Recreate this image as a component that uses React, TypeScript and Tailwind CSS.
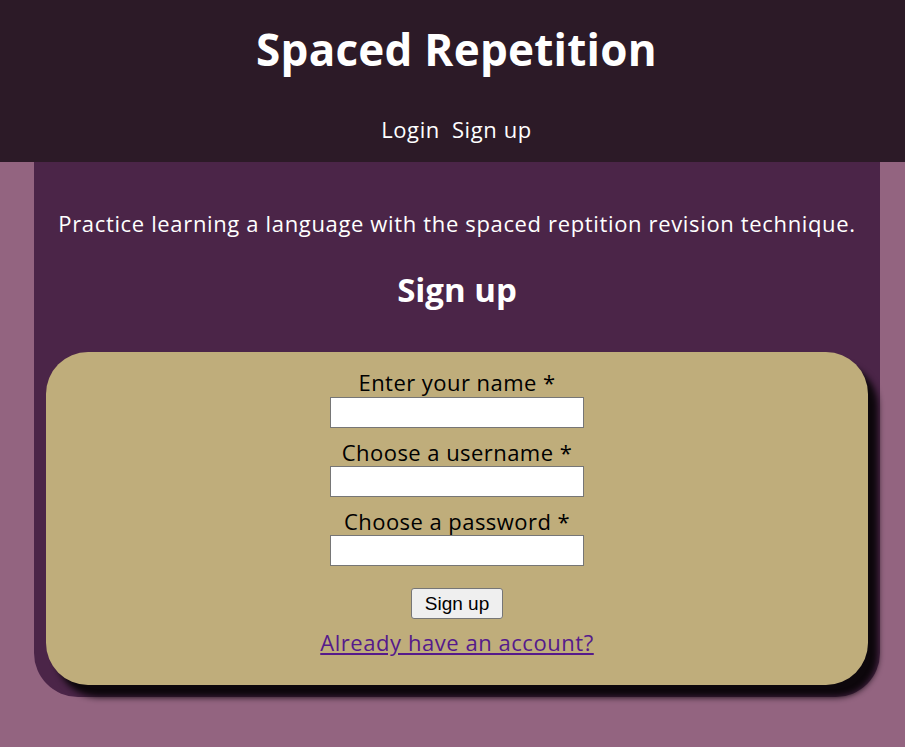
export default function App() {
  return (
    <div className="min-h-screen bg-[#936480] font-['Open_Sans',sans-serif] pb-[50px]">
      <header className="h-[162px] bg-[#2c1a27] pl-[8px] flex flex-col items-center text-white">
        <h1 className="mt-[19px] text-[44px] leading-[60px] font-bold tracking-[0.25px]">Spaced Repetition</h1>
        <nav className="mt-[35px] flex gap-[12px] text-[22px] leading-[30px] tracking-[0.6px]">
          <a href="#">Login</a>
          <a href="#">Sign up</a>
        </nav>
      </header>

      <main className="ml-[34px] w-[846px] bg-[#4b2548] rounded-b-[44px] px-3 pb-3 pt-[46px]">
        <p className="text-center text-white text-[22px] leading-[30px] tracking-[0.65px]">
          Practice learning a language with the spaced reptition revision technique.
        </p>
        <h2 className="mt-[32px] text-center text-white text-[33px] leading-[40px] font-bold">Sign up</h2>

        <form className="mt-[42px] h-[333px] bg-[#bfad7b] rounded-[42px] shadow-[10px_12px_6px_#0d070c] flex flex-col items-center pt-[16px] text-[22px] leading-[28px] tracking-[0.45px] text-black">
          <label htmlFor="name">Enter your name *</label>
          <input id="name" className="mt-[1px] w-[254px] h-[31px] bg-white border border-[#767676]" />
          <label htmlFor="username" className="mt-[10px]">Choose a username *</label>
          <input id="username" className="w-[254px] h-[31px] bg-white border border-[#767676]" />
          <label htmlFor="password" className="mt-[10px]">Choose a password *</label>
          <input id="password" type="password" className="w-[254px] h-[31px] bg-white border border-[#767676]" />
          <button type="button" className="mt-[22px] w-[92px] h-[31px] bg-[#efefef] border border-[#767676] rounded-[3px] font-['Liberation_Sans',sans-serif] text-[19px] leading-[20px] tracking-normal">
            Sign up
          </button>
          <a href="#" className="mt-[8px] text-[#551a8b] underline text-[22px] leading-[30px] tracking-[0.55px]">Already have an account?</a>
        </form>
      </main>
    </div>
  )
}
